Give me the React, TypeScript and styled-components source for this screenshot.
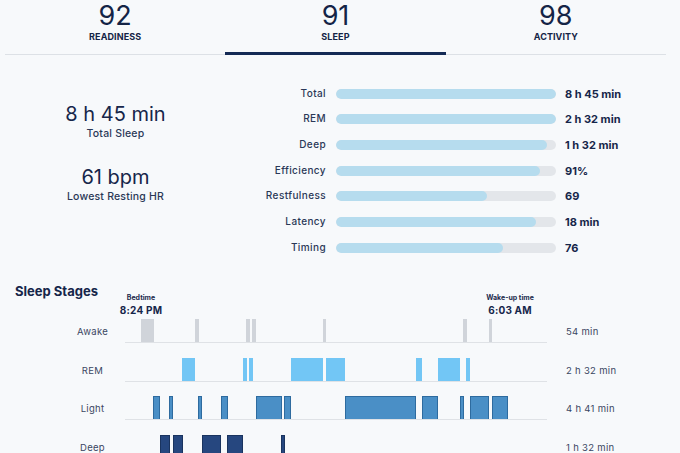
import React from 'react';
import styled, { createGlobalStyle } from 'styled-components';

const GlobalStyle = createGlobalStyle`
  html, body {
    margin: 0;
    padding: 0;
    background: #f7f9fb;
  }
  body {
    font-family: Inter, 'Noto Sans', 'Liberation Sans', sans-serif;
    color: #16264a;
    overflow: hidden;
  }
`;

const Page = styled.div`
  width: 680px;
  height: 453px;
  background: #f7f9fb;
`;

const Tabs = styled.div`
  display: grid;
  grid-template-columns: repeat(3, 1fr);
  margin: 0 14px 0 5px;
  border-bottom: 1px solid #dde1e6;
`;

const Tab = styled.div<{ $active?: boolean }>`
  position: relative;
  display: flex;
  flex-direction: column;
  align-items: center;
  padding-bottom: 12px;

  &::after {
    content: '';
    position: absolute;
    left: 0;
    right: 0;
    bottom: -1px;
    height: 3px;
    background: ${(p) => (p.$active ? '#142a55' : 'transparent')};
  }
`;

const TabScore = styled.div`
  font-size: 27px;
  line-height: 31px;
  font-weight: 400;
  color: #142446;
`;

const TabLabel = styled.div`
  margin-top: 1px;
  font-size: 9px;
  line-height: 10px;
  font-weight: 700;
  letter-spacing: 0.1px;
  color: #142446;
`;

const Stats = styled.div`
  display: grid;
  grid-template-columns: 221px 1fr;
  margin-left: 5px;
  padding-top: 26px;
`;

const Summary = styled.div`
  display: flex;
  flex-direction: column;
  align-items: center;
  gap: 23px;
  padding-top: 20px;
`;

const SummaryItem = styled.div`
  display: flex;
  flex-direction: column;
  align-items: center;
`;

const SummaryValue = styled.div`
  font-size: 20px;
  line-height: 26px;
  font-weight: 400;
  color: #16264a;
`;

const SummaryLabel = styled.div`
  font-size: 10.5px;
  line-height: 14px;
  font-weight: 500;
  letter-spacing: 0.2px;
  color: #2a3857;
`;

const Contributors = styled.div`
  display: flex;
  flex-direction: column;
`;

const ContributorRow = styled.div`
  display: grid;
  grid-template-columns: 100px 220px auto;
  column-gap: 10px;
  align-items: center;
  height: 25.67px;
`;

const ContributorName = styled.div`
  text-align: right;
  font-size: 10px;
  font-weight: 500;
  letter-spacing: 0.4px;
  color: #2a3857;
  margin-top: -2px;
`;

const Track = styled.div`
  height: 10px;
  border-radius: 5px;
  background: #e3e6ea;
  overflow: hidden;
`;

const Fill = styled.div`
  height: 100%;
  border-radius: 5px;
  background: #b6dcee;
`;

const ContributorValue = styled.div`
  font-size: 11px;
  font-weight: 700;
  color: #16264a;
  margin-left: -1px;
`;

const SectionTitle = styled.div`
  margin: 22px 0 6px 15px;
  font-size: 13px;
  line-height: 16px;
  font-weight: 700;
  color: #16264a;
`;

const Chart = styled.div`
  position: relative;
  display: flex;
  flex-direction: column;
`;

const StageRow = styled.div`
  display: grid;
  grid-template-columns: 60px 65px 422px auto;
  height: 38.5px;
`;

const StageName = styled.div`
  grid-column: 2;
  align-self: end;
  height: 23px;
  display: flex;
  align-items: center;
  justify-content: center;
  font-size: 9.5px;
  letter-spacing: 0.3px;
  color: #3a4662;
`;

const Plot = styled.div`
  position: relative;
  border-bottom: 1.5px solid #dfe2e6;
`;

const Block = styled.div<{ $fill: string; $edge: string }>`
  position: absolute;
  bottom: 0;
  height: 23px;
  box-sizing: border-box;
  background: ${(p) => p.$fill};
  border: 1px solid ${(p) => p.$edge};
  border-bottom: none;
`;

const StageTotal = styled.div`
  align-self: end;
  height: 23px;
  display: flex;
  align-items: center;
  padding-left: 19px;
  font-size: 9.5px;
  letter-spacing: 0.3px;
  color: #3a4662;
`;

const Marker = styled.div`
  position: absolute;
  top: -12px;
  display: flex;
  flex-direction: column;
  align-items: center;
  transform: translateX(-50%);
  white-space: nowrap;
`;

const MarkerCaption = styled.div`
  font-size: 7px;
  line-height: 10px;
  font-weight: 700;
  color: #1b2a4d;
`;

const MarkerTime = styled.div`
  font-size: 10px;
  line-height: 14px;
  font-weight: 700;
  letter-spacing: 0.2px;
  color: #16264a;
`;

const tabs = [
  { score: 92, label: 'READINESS' },
  { score: 91, label: 'SLEEP', active: true },
  { score: 98, label: 'ACTIVITY' },
];

const contributors = [
  { name: 'Total', pct: 100, value: '8 h 45 min' },
  { name: 'REM', pct: 100, value: '2 h 32 min' },
  { name: 'Deep', pct: 96, value: '1 h 32 min' },
  { name: 'Efficiency', pct: 92.7, value: '91%' },
  { name: 'Restfulness', pct: 68.6, value: '69' },
  { name: 'Latency', pct: 91, value: '18 min' },
  { name: 'Timing', pct: 76, value: '76' },
];

// segment spans are [start, end] in px from the left of the plot
const stages = [
  {
    name: 'Awake',
    total: '54 min',
    fill: '#d0d4da',
    edge: '#d0d4da',
    spans: [[16, 29], [70, 74], [121, 125], [127, 131], [198, 201], [338, 342], [364, 367]],
  },
  {
    name: 'REM',
    total: '2 h 32 min',
    fill: '#72c6f5',
    edge: '#72c6f5',
    spans: [[57, 70], [118, 122], [124, 128], [166, 198], [201, 220], [291, 297], [313, 335], [341, 345]],
  },
  {
    name: 'Light',
    total: '4 h 41 min',
    fill: '#4a8fc6',
    edge: '#2e6b9f',
    spans: [[28, 35], [44, 48], [73, 77], [96, 103], [131, 157], [159, 166], [220, 291], [297, 313], [335, 339], [345, 364], [367, 383]],
  },
  {
    name: 'Deep',
    total: '1 h 32 min',
    fill: '#26477f',
    edge: '#1a345f',
    spans: [[35, 45], [48, 58], [77, 96], [102, 118], [156, 160]],
  },
];

export default function App() {
  return (
    <Page>
      <GlobalStyle />
      <Tabs>
        {tabs.map((t) => (
          <Tab key={t.label} $active={t.active}>
            <TabScore>{t.score}</TabScore>
            <TabLabel>{t.label}</TabLabel>
          </Tab>
        ))}
      </Tabs>

      <Stats>
        <Summary>
          <SummaryItem>
            <SummaryValue>8 h 45 min</SummaryValue>
            <SummaryLabel>Total Sleep</SummaryLabel>
          </SummaryItem>
          <SummaryItem>
            <SummaryValue>61 bpm</SummaryValue>
            <SummaryLabel>Lowest Resting HR</SummaryLabel>
          </SummaryItem>
        </Summary>
        <Contributors>
          {contributors.map((c) => (
            <ContributorRow key={c.name}>
              <ContributorName>{c.name}</ContributorName>
              <Track>
                <Fill style={{ width: `${c.pct}%` }} />
              </Track>
              <ContributorValue>{c.value}</ContributorValue>
            </ContributorRow>
          ))}
        </Contributors>
      </Stats>

      <SectionTitle>Sleep Stages</SectionTitle>
      <Chart>
        <Marker style={{ left: 141 }}>
          <MarkerCaption>Bedtime</MarkerCaption>
          <MarkerTime>8:24 PM</MarkerTime>
        </Marker>
        <Marker style={{ left: 510 }}>
          <MarkerCaption>Wake-up time</MarkerCaption>
          <MarkerTime>6:03 AM</MarkerTime>
        </Marker>
        {stages.map((s) => (
          <StageRow key={s.name}>
            <StageName>{s.name}</StageName>
            <Plot>
              {s.spans.map(([a, b], i) => (
                <Block key={i} $fill={s.fill} $edge={s.edge} style={{ left: a, width: b - a }} />
              ))}
            </Plot>
            <StageTotal>{s.total}</StageTotal>
          </StageRow>
        ))}
      </Chart>
    </Page>
  );
}
